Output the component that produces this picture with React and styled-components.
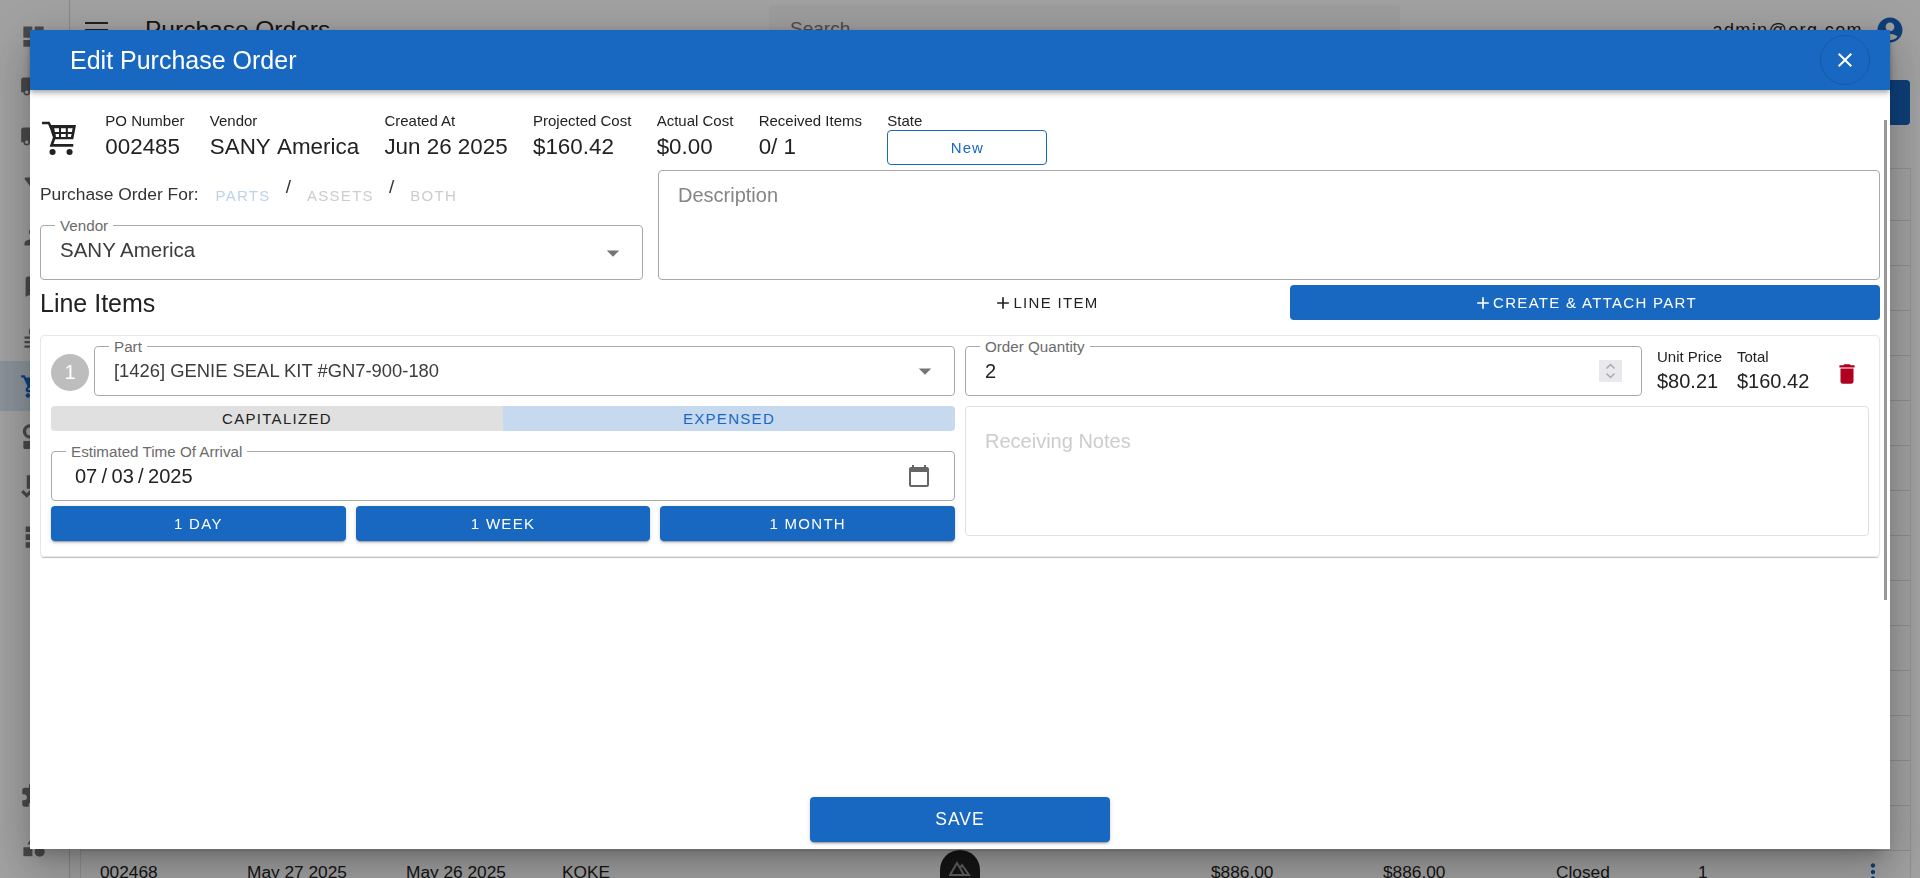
import React from 'react';
import styled, { createGlobalStyle } from 'styled-components';
import {
  MdDashboard, MdLocalShipping, MdPerson, MdBookmark, MdShoppingCart,
  MdExtension, MdCategory, MdFilterAlt, MdAccountCircle, MdMoreVert,
} from 'react-icons/md';

const BLUE = '#1868c2';

const GlobalStyle = createGlobalStyle`
  html, body { margin: 0; height: 100%; overflow: hidden; background: #fff; }
  body { font-family: "Liberation Sans", Arial, sans-serif; color: #222; }
  * { box-sizing: border-box; }
`;

/* page behind the dialog */
const Shell = styled.div`
  display: flex;
  height: 878px;
  overflow: hidden;
`;

const Sidebar = styled.nav`
  flex: 0 0 70px;
  display: flex;
  flex-direction: column;
  padding-top: 11px;
  border-right: 1px solid #d8d8d8;
  color: #757575;
`;

const NavItem = styled.div`
  height: 50px;
  display: flex;
  align-items: center;
  padding-left: 20px;
  font-size: 27px;
  background: ${({ $active }) => ($active ? '#dce7f5' : 'transparent')};
  color: ${({ $active }) => ($active ? '#1565c0' : 'inherit')};
`;

const NavGlyph = styled.svg`
  width: 1em;
  height: 1em;
  fill: currentColor;
`;

const NavBottom = styled.div`
  margin-top: auto;
  padding-bottom: 8px;
`;

const Main = styled.main`
  flex: 1;
  min-width: 0;
`;

const TopBar = styled.header`
  height: 60px;
  display: flex;
  align-items: center;
  padding: 0 15px;
`;

const Burger = styled.div`
  flex: 0 0 23px;
  height: 16px;
  margin-right: 37px;
  border-top: 2px solid #333;
  border-bottom: 2px solid #333;
  position: relative;
  &::after {
    content: '';
    position: absolute;
    left: 0;
    right: 0;
    top: 5px;
    height: 2px;
    background: #333;
  }
`;

const PageTitle = styled.div`
  flex: 0 0 624px;
  font-size: 24.5px;
`;

const Search = styled.div`
  flex: 0 0 631px;
  height: 50px;
  padding: 13px 21px;
  background: #f8f8f8;
  border-radius: 4px;
  font-size: 19px;
  color: #777;
`;

const UserBlock = styled.div`
  margin-left: auto;
  display: flex;
  align-items: center;
  gap: 12px;
  font-size: 18px;
  letter-spacing: 1.4px;
  svg { font-size: 30px; color: #1565c0; }
`;

const ActionRow = styled.div`
  display: flex;
  justify-content: flex-end;
  padding: 20px 10px 43px 0;
`;

const AddButton = styled.div`
  width: 200px;
  height: 45px;
  background: #1565c0;
  border-radius: 4px;
`;

const Table = styled.div`
  margin: 0 9px 0 10px;
  border: 1px solid #e4e4e4;
  border-bottom: 0;
  height: 720px;
`;

const Row = styled.div`
  display: grid;
  grid-template-columns: 147px 159px 156px 649px 172px 173px 142px 1fr 37px;
  align-items: center;
  height: ${({ $head }) => ($head ? '52px' : '45px')};
  padding: 0 0 2px 19px;
  border-bottom: 1px solid #e0e0e0;
  font-size: 17.3px;
  svg { font-size: 26px; color: #1565c0; margin-left: -13px; }
`;

const DevBadge = styled.div`
  position: fixed;
  left: 940px;
  bottom: -20px;
  width: 40px;
  height: 48px;
  border-radius: 20px;
  background: #222;
  display: flex;
  justify-content: center;
  padding-top: 10px;
`;

/* dialog */
const Backdrop = styled.div`
  position: fixed;
  inset: 0;
  background: rgba(0, 0, 0, 0.37);
  display: flex;
  align-items: flex-start;
  justify-content: center;
  padding-top: 30px;
`;

const Dialog = styled.section`
  width: 1860px;
  height: 819px;
  display: flex;
  flex-direction: column;
  background: #fff;
  box-shadow: 0 11px 15px -7px rgba(0, 0, 0, 0.2), 0 24px 38px 3px rgba(0, 0, 0, 0.14), 0 9px 46px 8px rgba(0, 0, 0, 0.12);
`;

const DialogHeader = styled.header`
  flex: 0 0 60px;
  display: flex;
  align-items: center;
  justify-content: space-between;
  padding: 0 20px 0 40px;
  background: ${BLUE};
  color: #fff;
  font-size: 25px;
  box-shadow: 0 2px 4px -1px rgba(0, 0, 0, 0.2), 0 4px 5px 0 rgba(0, 0, 0, 0.14), 0 1px 10px 0 rgba(0, 0, 0, 0.12);
  position: relative;
  z-index: 1;
`;

const CloseButton = styled.button`
  width: 50px;
  height: 50px;
  padding: 0;
  display: flex;
  align-items: center;
  justify-content: center;
  background: transparent;
  border: 1px solid rgba(0, 0, 0, 0.14);
  border-radius: 50%;
  color: #fff;
  svg { width: 24px; height: 24px; fill: currentColor; }
`;

const Content = styled.div`
  flex: 1;
  position: relative;
  overflow: hidden;
  padding: 22px 10px 0;
`;

const ScrollThumb = styled.div`
  position: absolute;
  top: 30px;
  right: 3px;
  width: 3px;
  height: 480px;
  background: #999;
`;

const Summary = styled.div`
  display: flex;
  gap: 25.3px;
  height: 53px;
  padding-left: 1px;
`;

const CartIcon = styled.svg`
  width: 34px;
  height: 34px;
  margin: 9px 4px 0 1px;
  fill: #222;
  stroke: #222;
`;

const Stat = styled.div`
  display: flex;
  flex-direction: column;
`;

const StatLabel = styled.div`
  font-size: 15px;
  line-height: 18px;
  white-space: nowrap;
`;

const StatValue = styled.div`
  font-size: 22.4px;
  line-height: 34px;
  white-space: nowrap;
  font-kerning: none;
`;

const StateBadge = styled.div`
  width: 160px;
  height: 35px;
  display: flex;
  align-items: center;
  justify-content: center;
  border: 1px solid ${BLUE};
  border-radius: 4px;
  color: ${BLUE};
  font-size: 15px;
  letter-spacing: 1px;
`;

const TopGrid = styled.div`
  display: grid;
  grid-template-columns: 603px 1fr;
  column-gap: 15px;
  margin-top: 5px;
`;

const LeftStack = styled.div`
  display: flex;
  flex-direction: column;
`;

const ForRow = styled.div`
  height: 55px;
  display: flex;
  align-items: center;
  padding-bottom: 7px;
  font-size: 17.4px;
  color: #333;
`;

const ForOption = styled.span`
  margin: 2px 0 0 ${({ $left }) => $left}px;
  font-size: 15px;
  letter-spacing: 1.3px;
  color: ${({ $tint }) => ($tint ? '#bcd2ec' : '#ccc')};
`;

const Slash = styled.span`
  margin: -14px 0 0 15px;
  font-size: 19px;
  color: #333;
`;

const Field = styled.div`
  position: relative;
  flex: ${({ $grow }) => ($grow ? 1 : 'none')};
  height: ${({ $height }) => $height}px;
  display: flex;
  align-items: center;
  padding-left: ${({ $pad }) => $pad || 19}px;
  padding-bottom: ${({ $lift }) => $lift || 0}px;
  border: 1px solid #a9a9a9;
  border-radius: 4px;
  font-size: ${({ $size }) => $size || 20}px;
  color: ${({ $dim }) => ($dim ? '#3c3c3c' : '#222')};
  word-spacing: ${({ $tight }) => ($tight ? '-1.2px' : 'normal')};
`;

const FieldLabel = styled.label`
  position: absolute;
  top: -9px;
  left: 14px;
  padding: 0 5px;
  background: #fff;
  font-size: 15.2px;
  line-height: 18px;
  color: #6b6b6b;
  white-space: nowrap;
  word-spacing: normal;
`;

const Caret = styled.svg`
  position: absolute;
  right: ${({ $right }) => $right}px;
  top: 50%;
  width: 30px;
  height: 30px;
  margin-top: -15px;
  fill: #757575;
`;

const Description = styled.div`
  height: 110px;
  padding: 13px 19px;
  border: 1px solid #a9a9a9;
  border-radius: 4px;
  font-size: 20px;
  color: #858585;
`;

const LineHeader = styled.div`
  display: flex;
  align-items: center;
  gap: 10px;
  height: 35px;
  margin-top: 5px;
`;

const SectionTitle = styled.h2`
  flex: 0 0 762px;
  margin: 2px 0 0;
  font-size: 25px;
  font-weight: 400;
`;

const TextAction = styled.div`
  flex: 0 0 468px;
  display: flex;
  align-items: center;
  justify-content: center;
  font-size: 15px;
  letter-spacing: 1.3px;
  svg { width: 20px; height: 20px; margin-right: 0; fill: currentColor; }
`;

const Button = styled.button`
  flex: ${({ $grow }) => ($grow ? 1 : 'none')};
  display: flex;
  align-items: center;
  justify-content: center;
  height: 35px;
  padding: 0;
  border: 0;
  border-radius: 4px;
  background: ${BLUE};
  color: #fff;
  font-family: inherit;
  font-size: 15px;
  letter-spacing: 1.3px;
  box-shadow: ${({ $flat }) => ($flat ? 'none' : '0 3px 1px -2px rgba(0,0,0,.2), 0 2px 2px 0 rgba(0,0,0,.14), 0 1px 5px 0 rgba(0,0,0,.12)')};
  svg { width: 20px; height: 20px; fill: currentColor; }
`;

const LineCard = styled.article`
  display: grid;
  grid-template-columns: 904px 1fr;
  column-gap: 10px;
  height: 222px;
  margin-top: 15px;
  padding: 10px 10px 0 10px;
  border: 1px solid #e6e6e6;
  border-radius: 4px;
  box-shadow: 0 2px 1px -1px rgba(0, 0, 0, 0.2), 0 1px 1px 0 rgba(0, 0, 0, 0.06);
`;

const Column = styled.div`
  display: flex;
  flex-direction: column;
  min-width: 0;
`;

const FieldRow = styled.div`
  display: flex;
  align-items: center;
  gap: ${({ $gap }) => $gap}px;
`;

const RowNumber = styled.div`
  flex: 0 0 38px;
  height: 37px;
  margin-top: 3px;
  display: flex;
  align-items: center;
  justify-content: center;
  border-radius: 50%;
  background: #bdbdbd;
  color: #fff;
  font-size: 20px;
`;

const CostToggle = styled.div`
  display: grid;
  grid-template-columns: 452px 452px;
  height: 25px;
  margin: 10px 0 20px;
  border-radius: 4px;
  overflow: hidden;
`;

const CostOption = styled.div`
  display: flex;
  align-items: center;
  justify-content: center;
  font-size: 15px;
  letter-spacing: 1.3px;
  background: ${({ $on }) => ($on ? '#c7d9ef' : '#e0e0e0')};
  color: ${({ $on }) => ($on ? BLUE : '#222')};
`;

const QuickDates = styled.div`
  display: flex;
  gap: 10px;
  margin-top: 5px;
`;

const CalendarIcon = styled.svg`
  position: absolute;
  right: 23px;
  top: 12px;
  width: 24px;
  height: 24px;
  fill: #666;
`;

const Spinner = styled.svg`
  position: absolute;
  right: 19px;
  top: 13px;
  width: 23px;
  height: 22px;
  background: #e9e9ed;
  fill: none;
  stroke: #aaa;
  stroke-width: 1.5;
`;

const Price = styled.div`
  flex: 0 0 ${({ $width }) => $width}px;
  display: flex;
  flex-direction: column;
  margin-top: 2px;
  white-space: nowrap;
`;

const PriceLabel = styled.div`
  font-size: 15px;
  line-height: 18px;
`;

const PriceValue = styled.div`
  font-size: 20px;
  line-height: 30px;
`;

const DeleteIcon = styled.svg`
  flex: 0 0 26px;
  height: 26px;
  margin: 5px 9px 0 0;
  fill: #b00020;
`;

const Notes = styled.div`
  height: 130px;
  margin-top: 10px;
  padding: 23px 19px;
  border: 1px solid #e0e0e0;
  border-radius: 4px;
  font-size: 20px;
  color: #ccc;
`;

const Footer = styled.footer`
  flex: 0 0 52px;
  display: flex;
  justify-content: center;
`;

const SaveButton = styled(Button)`
  width: 300px;
  height: 45px;
  font-size: 17.5px;
  letter-spacing: 1px;
`;

const Plus = () => (
  <svg viewBox="0 0 24 24"><path d="M19 13h-6v6h-2v-6H5v-2h6V5h2v6h6v2z" /></svg>
);

const ArrowDown = ({ right }) => (
  <Caret $right={right} viewBox="0 0 24 24"><path d="m7 10 5 5 5-5z" /></Caret>
);

const glyph = (d) => () => (
  <NavGlyph viewBox="0 0 24 24"><path fillRule="evenodd" d={d} /></NavGlyph>
);

const ListIcon = glyph('M4 12h16v2H4zM4 16h16v2H4zM4 20h16v2H4zM12 3a4 4 0 0 1 4 4v3H8V7a4 4 0 0 1 4-4z');
const StockIcon = glyph('M9 1a6.5 6.5 0 1 1 0 13A6.5 6.5 0 0 1 9 1zm0 3a3.5 3.5 0 1 0 0 7 3.5 3.5 0 0 0 0-7zM3 16h18v6a1 1 0 0 1-1 1H4a1 1 0 0 1-1-1z');
const ApprovalIcon = glyph('M6 2h14v12H6zM9 5v6h8V5zM1 17l2-2 3 3 4-4 2 2-6 6z');
const RowsIcon = glyph('M5 3h16v5H5zM5 10h16v5H5zM5 17h16v5H5z');

const stats = [
  ['PO Number', '002485'],
  ['Vendor', 'SANY America'],
  ['Created At', 'Jun 26 2025'],
  ['Projected Cost', '$160.42'],
  ['Actual Cost', '$0.00'],
  ['Received Items', '0/ 1'],
];

const navTop = [MdDashboard, MdLocalShipping, MdLocalShipping, MdFilterAlt, MdPerson, MdBookmark, ListIcon, MdShoppingCart, StockIcon, ApprovalIcon, RowsIcon];

export default function App() {
  return (
    <>
      <GlobalStyle />
      <Shell>
        <Sidebar>
          {navTop.map((Icon, i) => (
            <NavItem key={i} $active={Icon === MdShoppingCart}><Icon /></NavItem>
          ))}
          <NavBottom>
            <NavItem><MdExtension /></NavItem>
            <NavItem><MdCategory /></NavItem>
          </NavBottom>
        </Sidebar>
        <Main>
          <TopBar>
            <Burger />
            <PageTitle>Purchase Orders</PageTitle>
            <Search>Search</Search>
            <UserBlock>admin@org.com <MdAccountCircle /></UserBlock>
          </TopBar>
          <ActionRow><AddButton /></ActionRow>
          <Table>
            <Row $head />
            {Array.from({ length: 14 }, (_, i) => <Row key={i} />)}
            <Row>
              <span>002468</span>
              <span>May 27 2025</span>
              <span>May 26 2025</span>
              <span>KOKE</span>
              <span>$886.00</span>
              <span>$886.00</span>
              <span>Closed</span>
              <span>1</span>
              <MdMoreVert />
            </Row>
          </Table>
        </Main>
        <DevBadge>
          <svg width="22" height="16" viewBox="0 0 22 16" fill="none" stroke="#999" strokeWidth="2">
            <path d="M1 15 8 3l7 12H1zM11 8l2-3 7 10h-5" />
          </svg>
        </DevBadge>
      </Shell>

      <Backdrop>
        <Dialog>
          <DialogHeader>
            Edit Purchase Order
            <CloseButton aria-label="Close">
              <svg viewBox="0 0 24 24"><path d="M19 6.41 17.59 5 12 10.59 6.41 5 5 6.41 10.59 12 5 17.59 6.41 19 12 13.41 17.59 19 19 17.59 13.41 12z" /></svg>
            </CloseButton>
          </DialogHeader>

          <Content>
            <ScrollThumb />
            <Summary>
              <CartIcon viewBox="0 0 100 100">
                <path d="M0 6h20l7 14" fill="none" strokeWidth="7" />
                <path
                  fillRule="evenodd"
                  stroke="none"
                  d="M20 12H100L92 54H34ZM36 21h14v11H38ZM56 21h14v11H56ZM76 21h14l-2 11H76ZM40 38h10v9H41ZM56 38h14v9H56ZM76 38h11l-2 9H76Z"
                />
                <path d="M36 50 28 72H92" fill="none" strokeWidth="8" />
                <circle cx="31" cy="91" r="9" stroke="none" />
                <circle cx="81" cy="91" r="9" stroke="none" />
              </CartIcon>
              {stats.map(([label, value]) => (
                <Stat key={label}>
                  <StatLabel>{label}</StatLabel>
                  <StatValue>{value}</StatValue>
                </Stat>
              ))}
              <Stat>
                <StatLabel>State</StatLabel>
                <StateBadge>New</StateBadge>
              </Stat>
            </Summary>

            <TopGrid>
              <LeftStack>
                <ForRow>
                  Purchase Order For:
                  <ForOption $left={17} $tint>PARTS</ForOption>
                  <Slash>/</Slash>
                  <ForOption $left={16}>ASSETS</ForOption>
                  <Slash>/</Slash>
                  <ForOption $left={16}>BOTH</ForOption>
                </ForRow>
                <Field $height={55} $lift={5} $size={20.5} $dim>
                  <FieldLabel>Vendor</FieldLabel>
                  SANY America
                  <ArrowDown right={14} />
                </Field>
              </LeftStack>
              <Description>Description</Description>
            </TopGrid>

            <LineHeader>
              <SectionTitle>Line Items</SectionTitle>
              <TextAction><Plus />LINE ITEM</TextAction>
              <Button $grow $flat><Plus />CREATE &amp; ATTACH PART</Button>
            </LineHeader>

            <LineCard>
              <Column>
                <FieldRow $gap={5}>
                  <RowNumber>1</RowNumber>
                  <Field $grow $height={50} $size={18.4} $dim>
                    <FieldLabel>Part</FieldLabel>
                    [1426] GENIE SEAL KIT #GN7-900-180
                    <ArrowDown right={14} />
                  </Field>
                </FieldRow>
                <CostToggle>
                  <CostOption>CAPITALIZED</CostOption>
                  <CostOption $on>EXPENSED</CostOption>
                </CostToggle>
                <Field $height={50} $pad={23} $tight>
                  <FieldLabel>Estimated Time Of Arrival</FieldLabel>
                  07 / 03 / 2025
                  <CalendarIcon viewBox="0 0 24 24">
                    <path d="M20 3h-1V1h-2v2H7V1H5v2H4c-1.1 0-2 .9-2 2v16c0 1.1.9 2 2 2h16c1.1 0 2-.9 2-2V5c0-1.1-.9-2-2-2zm0 18H4V8h16v13z" />
                  </CalendarIcon>
                </Field>
                <QuickDates>
                  <Button $grow>1 DAY</Button>
                  <Button $grow>1 WEEK</Button>
                  <Button $grow>1 MONTH</Button>
                </QuickDates>
              </Column>

              <Column>
                <FieldRow $gap={15}>
                  <Field $grow $height={50}>
                    <FieldLabel>Order Quantity</FieldLabel>
                    2
                    <Spinner viewBox="0 0 23 22"><path d="m7.5 8.5 4-4 4 4M7.5 13.5l4 4 4-4" /></Spinner>
                  </Field>
                  <Price $width={65}>
                    <PriceLabel>Unit Price</PriceLabel>
                    <PriceValue>$80.21</PriceValue>
                  </Price>
                  <Price $width={82}>
                    <PriceLabel>Total</PriceLabel>
                    <PriceValue>$160.42</PriceValue>
                  </Price>
                  <DeleteIcon viewBox="0 0 24 24">
                    <path d="M6 19c0 1.1.9 2 2 2h8c1.1 0 2-.9 2-2V7H6v12zM19 4h-3.5l-1-1h-5l-1 1H5v2h14V4z" />
                  </DeleteIcon>
                </FieldRow>
                <Notes>Receiving Notes</Notes>
              </Column>
            </LineCard>
          </Content>

          <Footer>
            <SaveButton>SAVE</SaveButton>
          </Footer>
        </Dialog>
      </Backdrop>
    </>
  );
}
